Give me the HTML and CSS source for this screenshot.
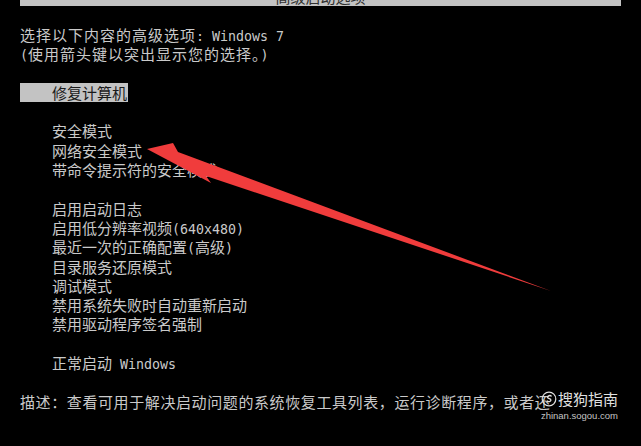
FILE: index.html
```html
<!DOCTYPE html>
<html lang="zh-CN">
  <head>
    <meta charset="utf-8" />
    <meta name="viewport" content="width=device-width" />
    <title>高级启动选项</title>
    <link rel="stylesheet" href="styles.css">
  </head>
  <body>
    <main class="screen">
      <div class="titlebar"><span>高级启动选项</span></div>

      <div class="content">
        <div class="group header">
          <p>选择以下内容的高级选项<span class="en">: Windows 7</span></p>
          <p><span class="en">(</span>使用箭头键以突出显示您的选择。<span class="en">)</span></p>
        </div>

        <ul class="group menu">
          <li><span class="selected">修复计算机</span></li>
        </ul>

        <ul class="group menu">
          <li>安全模式</li>
          <li>网络安全模式</li>
          <li>带命令提示符的安全模式</li>
        </ul>

        <ul class="group menu">
          <li>启用启动日志</li>
          <li>启用低分辨率视频<span class="en">(640x480)</span></li>
          <li>最近一次的正确配置<span class="en">(</span>高级<span class="en">)</span></li>
          <li>目录服务还原模式</li>
          <li>调试模式</li>
          <li>禁用系统失败时自动重新启动</li>
          <li>禁用驱动程序签名强制</li>
        </ul>

        <ul class="group menu">
          <li>正常启动<span class="en"> Windows</span></li>
        </ul>

        <p class="group description">描述：查看可用于解决启动问题的系统恢复工具列表，运行诊断程序，或者还</p>
      </div>

      <!-- annotation arrow drawn over the screen -->
      <svg class="arrow" viewBox="0 0 641 446" width="641" height="446">
        <polygon points="147,149 173,143 178,152 551,291 206,176 211,183" fill="#f03c3c" />
      </svg>

      <div class="watermark">
        <div class="brand">
          <svg class="logo" viewBox="0 0 16 16" width="16" height="16">
            <circle cx="8" cy="8" r="6.8" fill="none" stroke="#e0e0e0" stroke-width="1.2" />
            <path d="M10.6 5.4c-.8-.8-2.4-1-3.4-.3-1 .7-.7 1.9.4 2.3l1.3.5c1.1.4 1.3 1.7.3 2.3-1 .6-2.6.4-3.4-.5" fill="none" stroke="#e0e0e0" stroke-width="1.3" />
          </svg>
          <span>搜狗指南</span>
        </div>
        <div class="url">zhinan.sogou.com</div>
      </div>
    </main>
  </body>
</html>
```

FILE: styles.css
```css
html,
body {
  margin: 0;
  background: #000;
}

.screen {
  position: relative;
  width: 641px;
  height: 446px;
  overflow: hidden;
  background: #000;
  color: #cacaca;
  font-family: "Noto Sans CJK SC", "DejaVu Sans", sans-serif;
  font-size: 15px;
  line-height: 19.3px;
}

.titlebar {
  height: 6px;
  margin: 0 20px;
  overflow: hidden;
  background: #c3c3c3;
  color: #303030;
  text-align: center;
}

.titlebar span {
  display: block;
  margin-top: -13px;
}

.content {
  display: flex;
  flex-direction: column;
  gap: 19.3px;
  padding: 19px 20px 0;
}

.group {
  margin: 0;
  padding: 0;
  list-style: none;
}

.group p {
  margin: 0;
  height: 19.3px;
}

.header {
  letter-spacing: 1px;
}

.description {
  height: 19.3px;
  letter-spacing: 0.6px;
}

.menu li {
  height: 19.3px;
  padding-left: 32px;
}

.menu li .selected {
  display: inline-block;
  margin-left: -32px;
  padding: 0 1px 0 32px;
  background: #c3c3c3;
  color: #1a1a1a;
}

.en {
  font-family: "DejaVu Sans Mono", monospace;
  font-size: 13.3px;
  line-height: 1;
  letter-spacing: 0;
}

.arrow {
  position: absolute;
  top: 0;
  left: 0;
  pointer-events: none;
}

.watermark {
  position: absolute;
  top: 390px;
  right: 23px;
  display: flex;
  flex-direction: column;
  align-items: flex-end;
  color: #e0e0e0;
}

.brand {
  display: flex;
  align-items: center;
  font-size: 15px;
  line-height: 18px;
}

.logo {
  margin-right: 1px;
}

.url {
  margin-top: 2px;
  font-family: "Liberation Sans", Arial, sans-serif;
  font-size: 9.5px;
  line-height: 12px;
  color: #c4c4c4;
}
```
